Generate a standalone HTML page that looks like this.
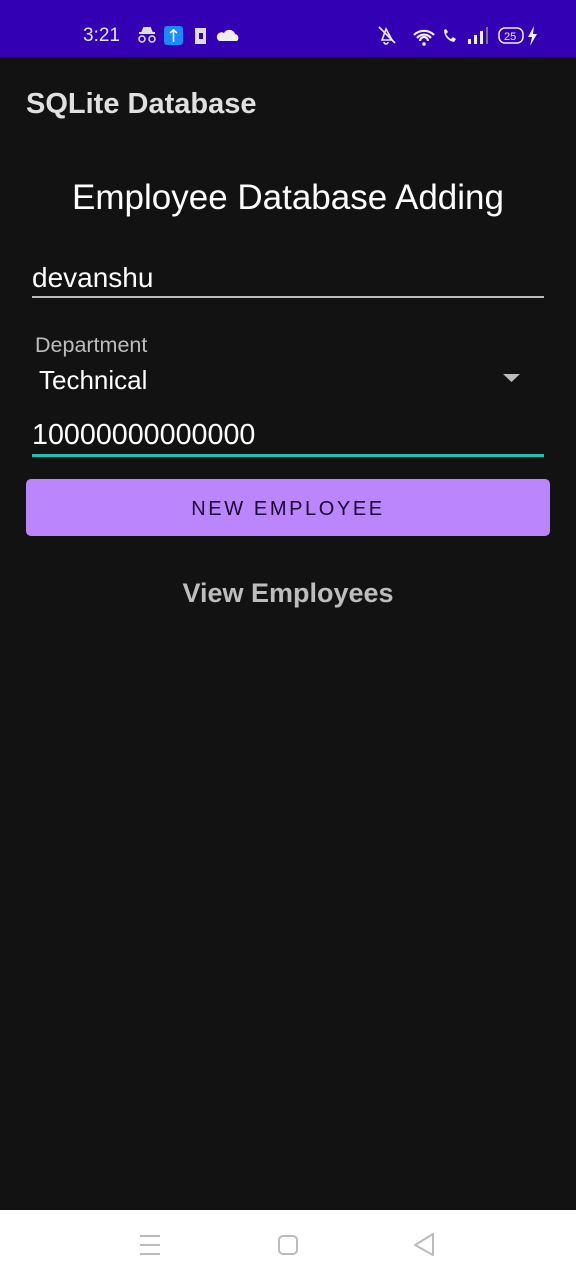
<!DOCTYPE html>
<html><head><style>
*{margin:0;padding:0;box-sizing:border-box}
body{width:576px;height:1280px;background:#121212;font-family:"Liberation Sans",sans-serif;position:relative;overflow:hidden;color:#fff}
.a{position:absolute;white-space:nowrap}
</style></head><body>
<div class="a" style="left:0;top:0;width:576px;height:57px;background:#3300b3"></div>
<div class="a" style="left:83px;top:25px;font-size:19px;color:#e8e4ff">3:21</div>
<svg class="a" style="left:136px;top:26px" width="110" height="20">
<path d="M3 7h16M6 7l2-5h6l2 5" stroke="#ddd" stroke-width="2" fill="#ddd"/>
<circle cx="6" cy="13" r="3" stroke="#ddd" stroke-width="1.5" fill="none"/><circle cx="16" cy="13" r="3" stroke="#ddd" stroke-width="1.5" fill="none"/>
<rect x="28" y="0" width="19" height="19" rx="3" fill="#1e88ff"/><path d="M37.5 3v13M34 7l3.5-3 3.5 3" stroke="#fff" stroke-width="1.5" fill="none"/>
<rect x="59" y="2" width="11" height="16" fill="#ddd"/><rect x="63" y="7" width="4" height="6" fill="#3300b3"/>
<path d="M83 15h18a4 4 0 0 0-2-7a6 6 0 0 0-11-1a4 4 0 0 0-5 8z" fill="#eee"/>
</svg>
<svg class="a" style="left:376px;top:24px" width="170" height="24">
<path d="M10 5l-4 11h10zM12 18a2 2 0 0 1-4 0" stroke="#eee" stroke-width="1.6" fill="none"/><path d="M3 3l16 16" stroke="#eee" stroke-width="1.6"/>
<path d="M38 11a14 14 0 0 1 20 0M41 14a9 9 0 0 1 14 0M44 17a4 4 0 0 1 8 0" stroke="#eee" stroke-width="2.2" fill="none"/><circle cx="48" cy="20" r="1.8" fill="#eee"/>
<path d="M68 6c0 6 4 11 10 12l2-3-3-2-2 2c-2-1-4-3-5-5l2-2-2-3z" fill="#eee"/>
<rect x="92" y="15" width="3" height="5" fill="#eee"/><rect x="98" y="11" width="3" height="9" fill="#eee"/><rect x="104" y="7" width="3" height="13" fill="#eee"/><rect x="110" y="3" width="2" height="17" fill="#777"/>
<rect x="123" y="4" width="24" height="15" rx="6" stroke="#eee" stroke-width="1.5" fill="none"/><text x="128" y="16" font-size="11" fill="#eee" font-family="Liberation Sans">25</text>
<path d="M158 2l-6 11h4l-2 9 7-12h-4z" fill="#eee"/>
</svg>
<div class="a" style="left:26px;top:88px;font-size:29px;font-weight:bold;color:#e0e0e0">SQLite Database</div>
<div class="a" style="left:0;width:576px;text-align:center;top:178px;font-size:35px;color:#fff">Employee Database Adding</div>
<div class="a" style="left:32px;top:262px;font-size:28px">devanshu</div>
<div class="a" style="left:32px;top:296px;width:512px;height:2px;background:#bbb"></div>
<div class="a" style="left:35px;top:333px;font-size:21.5px;color:#bdbdbd">Department</div>
<div class="a" style="left:39px;top:365px;font-size:26px">Technical</div>
<svg class="a" style="left:503px;top:373px" width="18" height="10"><path d="M0 1h17l-8.5 8z" fill="#bbb"/></svg>
<div class="a" style="left:32px;top:419px;font-size:28.7px">10000000000000</div>
<div class="a" style="left:32px;top:454px;width:512px;height:3px;background:#20c0b0"></div>
<div class="a" style="left:26px;top:479px;width:524px;height:57px;border-radius:5px;background:#bb86fc;color:#1a0033;font-size:20px;letter-spacing:2.6px;text-align:center;line-height:61px">NEW EMPLOYEE</div>
<div class="a" style="left:0;width:576px;text-align:center;top:578px;font-size:27px;font-weight:bold;color:#bdbdbd">View Employees</div>
<div class="a" style="left:0;top:1210px;width:576px;height:70px;background:#fff"></div>
<svg class="a" style="left:130px;top:1228px" width="320" height="36">
<path d="M10 8h20M10 17h20M10 26h20" stroke="#bbb" stroke-width="2"/>
<rect x="149" y="8" width="18" height="18" rx="4" stroke="#bbb" stroke-width="2" fill="none"/>
<path d="M303 6l-18 11 18 10z" stroke="#bbb" stroke-width="2" fill="none" stroke-linejoin="round"/>
</svg>
</body></html>
